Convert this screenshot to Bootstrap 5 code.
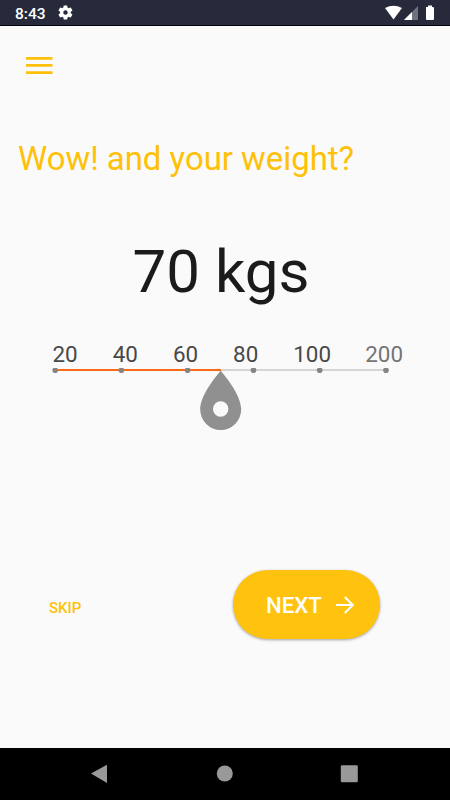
<!DOCTYPE html>
<html lang="en">
<head>
<meta charset="utf-8">
<meta name="viewport" content="width=device-width, initial-scale=1">
<title>Your weight</title>
<link href="https://cdn.jsdelivr.net/npm/bootstrap@5.3.0/dist/css/bootstrap.min.css" rel="stylesheet">
<style>
body { font-family: Roboto, "Liberation Sans", sans-serif; background: #fafafa; }
.screen { height: 800px; overflow: hidden; }
.status-bar { height: 26px; background: #272a3b; border-bottom: 1px solid #05060c; padding: 0 15px; }
.clock { font-size: 15.5px; font-weight: 500; line-height: 26px; width: 42px; padding-top: 2px; }
.menu-row { height: 80px; padding: 27px 26px 0; }
.question { font-size: 32.9px; line-height: 40px; margin: 33px 0 0; padding-left: 18px; font-weight: 400; color: #ffc107; }
.amount { font-size: 60px; line-height: 72px; margin-top: 57px; padding-right: 8px; color: #1b1b1b; }
.scale { padding-left: 52.5px; margin-top: 32px; font-size: 22.4px; line-height: 28px; color: #484848; }
.scale > span { width: 60.2px; }
.scale > .wide { width: 72px; }
.scale > .last { width: 50px; color: #757575; }
.actions { padding: 0 70px 0 38px; margin-top: 134px; }
.btn-skip { font-size: 15px; font-weight: 500; line-height: 20px; padding: 10px; margin-top: 7px; color: #ffc107; }
.btn-next { width: 147px; height: 69px; font-size: 22.2px; font-weight: 500; color: #fff; background: #ffc20f; box-shadow: 0 1px 3px rgba(0,0,0,.35); padding: 2px 0 0 33px; }
.arrow { margin-left: 14px; margin-top: -2px; }
.nav-keys { height: 52px; background: #000; }
</style>
<script src="https://cdn.jsdelivr.net/npm/bootstrap@5.3.0/dist/js/bootstrap.bundle.min.js"></script>
</head>
<body>
<div class="screen d-flex flex-column">
  <header class="status-bar d-flex align-items-center text-white flex-shrink-0">
    <span class="clock">8:43</span>
    <svg width="17" height="17" viewBox="0 0 24 24" fill="#fff"><path d="M19.4 13c.1-.3.1-.6.1-1s0-.7-.1-1l2.100-1.600c.2-.2.300-.4.100-.6l-2-3.500c-.1-.2-.4-.3-.6-.2l-2.500 1c-.5-.4-1.100-.7-1.700-1l-.4-2.600c0-.2-.2-.4-.5-.4h-4c-.2 0-.5.2-.5.4l-.4 2.600c-.6.3-1.200.6-1.700 1l-2.500-1c-.2-.1-.5 0-.6.2l-2 3.500c-.1.2-.1.500.1.600l2.100 1.600c0 .3-.1.700-.1 1s0 .7.1 1l-2.100 1.600c-.2.200-.2.400-.1.700l2 3.400c.1.200.4.300.6.200l2.500-1c.5.400 1.100.8 1.700 1l.4 2.700c0 .2.300.4.500.4h4c.3 0 .5-.2.500-.4l.4-2.700c.6-.2 1.200-.6 1.700-1l2.500 1c.2.1.5 0 .6-.2l2-3.400c.1-.3.1-.5-.1-.7zM12 15.200a3.200 3.200 0 1 1 0-6.400 3.200 3.200 0 0 1 0 6.400z"/></svg>
    <svg class="ms-auto" width="50" height="16" viewBox="385 5 50 16" fill="#fff"><path d="M385 8Q393.500 3.500 402 8L393.500 19.500Z"/><path d="M404 20L418 6V20Z" fill="#707280"/><path d="M404 20L412 12V20Z"/><path d="M426 7h2V5.600h4V7h1q1 0 1 1v11q0 1-1 1h-6q-1 0-1-1z"/></svg>
  </header>
  <main class="flex-grow-1">
    <div class="menu-row"><svg class="d-block" width="27" height="24" viewBox="0 0 27 24" stroke="#ffc107" stroke-width="2.800"><path d="M0 5.400h26.500M0 12.400h26.500M0 19.700h26.500"/></svg></div>
    <h1 class="question">Wow! and your weight?</h1>
    <div class="amount text-center">70 kgs</div>
    <div class="scale d-flex"><span>20</span><span>40</span><span>60</span><span>80</span><span class="wide">100</span><span class="last">200</span></div>
    <svg class="d-block" width="450" height="68" viewBox="0 368 450 68">
      <path d="M220 370H386" stroke="#d5d5d5" stroke-width="2"/><path d="M55 370H221" stroke="#fb6a16" stroke-width="2"/>
      <g fill="#858585"><circle cx="55.200" cy="370.200" r="2.800"/><circle cx="121.400" cy="370.200" r="2.800"/><circle cx="187.600" cy="370.200" r="2.800"/><circle cx="253.500" cy="370.200" r="2.800"/><circle cx="319.700" cy="370.200" r="2.800"/><circle cx="386" cy="370.200" r="2.800"/></g>
      <path fill="#909090" fill-rule="evenodd" d="M220.700 370.700C227 378 241.200 396 241.200 409.500A20.500 20.500 0 0 1 200.200 409.500C200.200 396 214.400 378 220.700 370.700ZM220.700 401.300a7.700 7.700 0 1 0 0 15.400a7.700 7.700 0 1 0 0-15.400Z"/>
    </svg>
    <div class="actions d-flex align-items-center justify-content-between">
      <button class="btn btn-skip">SKIP</button>
      <button class="btn btn-next rounded-pill border-0 d-flex align-items-center">NEXT
        <svg class="arrow" width="18" height="18" viewBox="0 0 18 18" fill="none" stroke="#fff" stroke-width="2.100"><path d="M0 9h16.500M8.800 1l8 8l-8 8"/></svg>
      </button>
    </div>
  </main>
  <footer class="nav-keys flex-shrink-0"><svg class="d-block" width="450" height="52" viewBox="0 748 450 52" fill="#999"><path d="M91 773.500L107 764.700V783Z"/><circle cx="224.800" cy="773.500" r="8"/><rect x="340.800" y="765.200" width="17" height="17" rx="1.200"/></svg></footer>
</div>
</body>
</html>
